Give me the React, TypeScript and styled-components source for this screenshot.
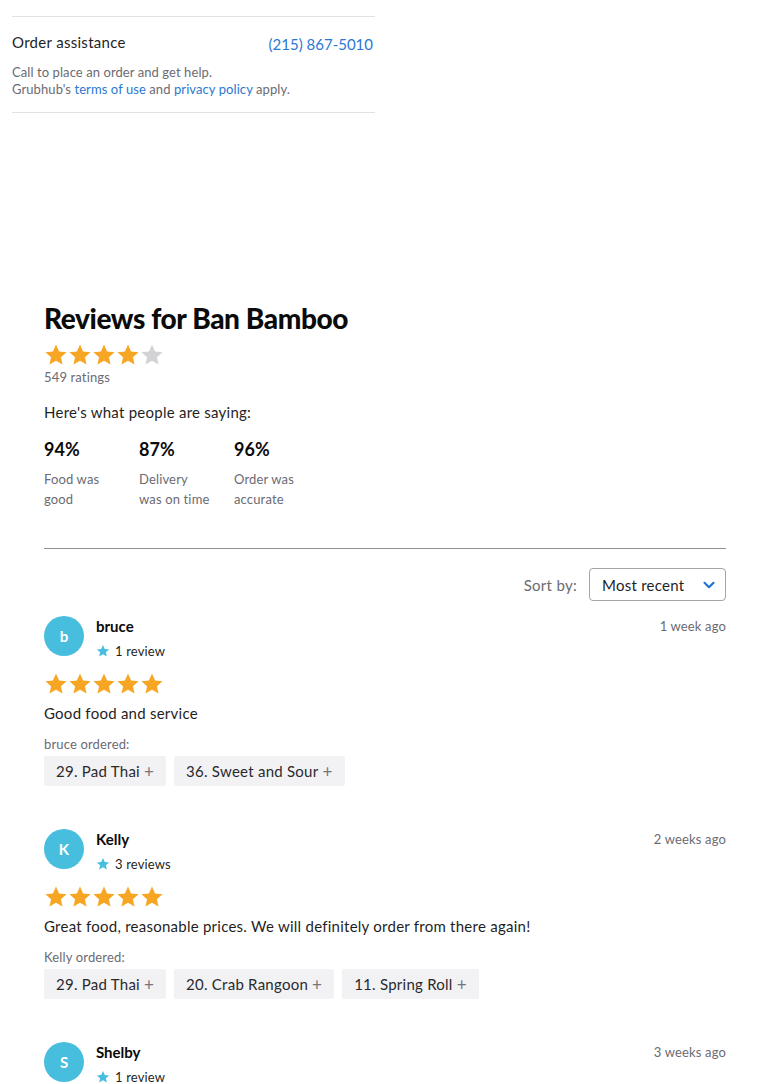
import React from "react";
import styled, { createGlobalStyle } from "styled-components";

const Global = createGlobalStyle`
  html, body { margin: 0; padding: 0; background: #fff; }
  body { font-family: Lato, "Liberation Sans", Arial, sans-serif; color: #1f1f1f; }
  * { box-sizing: border-box; }
`;

const Page = styled.div`
  width: 770px;
  min-height: 1084px;
  overflow: hidden;
`;

const AssistPanel = styled.section`
  width: 363px;
  margin-left: 12px;
  padding-top: 16px;
`;

const AssistInner = styled.div`
  border-top: 1px solid #e2e2e4;
  border-bottom: 1px solid #e2e2e4;
  padding: 15px 0 14px;
`;

const AssistRow = styled.div`
  display: flex;
  justify-content: space-between;
  align-items: flex-start;
`;

const AssistTitle = styled.span`
  font-size: 15px;
  line-height: 20px;
  letter-spacing: 0.3px;
  color: #1f1f1f;
`;

const Phone = styled.a`
  font-size: 15px;
  line-height: 20px;
  margin-top: 2px;
  margin-right: 2px;
  color: #2b78d3;
  text-decoration: none;
`;

const Fine = styled.p`
  margin: 10px 0 0;
  font-size: 13px;
  line-height: 17px;
  letter-spacing: 0.08px;
  color: #6b6b73;
`;

const Link = styled.a`
  color: #2b78d3;
  text-decoration: none;
`;

const Reviews = styled.section`
  width: 682px;
  margin: 188px 0 0 44px;
`;

const Heading = styled.h2`
  margin: 0;
  font-size: 28px;
  line-height: 34px;
  font-weight: 900;
  color: #0b0b0b;
  letter-spacing: -0.4px;
`;

const StarRow = styled.div<{ $mt: number }>`
  display: flex;
  margin-top: ${(p) => p.$mt}px;
  height: 24px;
`;

const Muted = styled.div<{ $mt: number }>`
  margin-top: ${(p) => p.$mt}px;
  font-size: 13px;
  line-height: 16px;
  letter-spacing: 0.15px;
  color: #6b6b73;
`;

const Body = styled.div<{ $mt: number }>`
  margin-top: ${(p) => p.$mt}px;
  font-size: 15px;
  line-height: 20px;
  letter-spacing: 0.25px;
  color: #1f1f1f;
`;

const Stats = styled.div`
  display: flex;
  margin-top: 15px;
`;

const Stat = styled.div`
  width: 95px;
`;

const StatValue = styled.div`
  font-size: 18px;
  line-height: 24px;
  font-weight: 700;
  color: #0b0b0b;
`;

const StatLabel = styled.div`
  margin-top: 8px;
  width: 72px;
  font-size: 13px;
  line-height: 20px;
  letter-spacing: 0.15px;
  color: #6b6b73;
`;

const Divider = styled.hr`
  margin: 39px 0 0;
  border: none;
  border-top: 1px solid #8f8f96;
  height: 0;
`;

const SortRow = styled.div`
  display: flex;
  justify-content: flex-end;
  align-items: center;
  gap: 12px;
  margin-top: 19px;
`;

const SortLabel = styled.span`
  font-size: 15px;
  letter-spacing: 0.3px;
  color: #6b6b73;
`;

const Select = styled.div`
  width: 137px;
  height: 33px;
  border: 1px solid #a4a4ab;
  border-radius: 4px;
  display: flex;
  align-items: center;
  justify-content: space-between;
  padding: 0 9px 0 12px;
  font-size: 15px;
  letter-spacing: 0.25px;
  color: #1f1f1f;
`;

const Review = styled.article`
  margin-top: 15px;
  padding-bottom: 28px;
`;

const ReviewHead = styled.div`
  display: flex;
  align-items: flex-start;
`;

const Avatar = styled.div`
  width: 40px;
  height: 40px;
  border-radius: 50%;
  background: #48bedf;
  color: #fff;
  font-weight: 700;
  font-size: 15px;
  display: flex;
  align-items: center;
  justify-content: center;
  flex-shrink: 0;
`;

const Who = styled.div`
  margin-left: 12px;
  flex: 1;
`;

const Name = styled.div`
  font-size: 15px;
  line-height: 20px;
  font-weight: 700;
  color: #0b0b0b;
`;

const Count = styled.div`
  margin-top: 7px;
  display: flex;
  align-items: center;
  gap: 5px;
  font-size: 13px;
  line-height: 16px;
  letter-spacing: 0.15px;
  color: #1f1f1f;
`;

const When = styled.div`
  font-size: 13px;
  line-height: 20px;
  letter-spacing: 0.15px;
  color: #6b6b73;
`;

const Chips = styled.div`
  display: flex;
  gap: 8px;
  margin-top: 4px;
`;

const Chip = styled.div`
  height: 30px;
  padding: 0 12px;
  display: flex;
  align-items: center;
  gap: 4px;
  background: #f2f2f4;
  border-radius: 2px;
  font-size: 15px;
  letter-spacing: 0.25px;
  color: #2a2a2e;
`;

const Plus = styled.span`
  color: #75757d;
  font-size: 17px;
`;

const STAR = "M12 1.6l3.05 6.9 7.5.72-5.66 5 1.66 7.36L12 17.75 5.45 21.58 7.1 14.22 1.45 9.22l7.5-.72z";

function Star({ color, size = 24 }: { color: string; size?: number }) {
  return (
    <svg width={size} height={size} viewBox="0 0 24 24" aria-hidden>
      <path d={STAR} fill={color} />
    </svg>
  );
}

function Stars({ n, mt }: { n: number; mt: number }) {
  return (
    <StarRow $mt={mt}>
      {[0, 1, 2, 3, 4].map((i) => (
        <Star key={i} color={i < n ? "#f6a623" : "#d3d3d6"} />
      ))}
    </StarRow>
  );
}

type R = { initial: string; name: string; count: string; when: string; text: string; items: string[] };

const data: R[] = [
  { initial: "b", name: "bruce", count: "1 review", when: "1 week ago", text: "Good food and service", items: ["29. Pad Thai", "36. Sweet and Sour"] },
  { initial: "K", name: "Kelly", count: "3 reviews", when: "2 weeks ago", text: "Great food, reasonable prices. We will definitely order from there again!", items: ["29. Pad Thai", "20. Crab Rangoon", "11. Spring Roll"] },
  { initial: "S", name: "Shelby", count: "1 review", when: "3 weeks ago", text: "", items: [] },
];

export default function App() {
  return (
    <Page>
      <Global />
      <AssistPanel>
        <AssistInner>
          <AssistRow>
            <AssistTitle>Order assistance</AssistTitle>
            <Phone>(215) 867-5010</Phone>
          </AssistRow>
          <Fine>
            Call to place an order and get help.
            <br />
            Grubhub's <Link>terms of use</Link> and <Link>privacy policy</Link> apply.
          </Fine>
        </AssistInner>
      </AssistPanel>

      <Reviews>
        <Heading>Reviews for Ban Bamboo</Heading>
        <Stars n={4} mt={8} />
        <Muted $mt={2}>549 ratings</Muted>
        <Body $mt={17}>Here's what people are saying:</Body>
        <Stats>
          <Stat>
            <StatValue>94%</StatValue>
            <StatLabel>Food was good</StatLabel>
          </Stat>
          <Stat>
            <StatValue>87%</StatValue>
            <StatLabel>Delivery was on time</StatLabel>
          </Stat>
          <Stat>
            <StatValue>96%</StatValue>
            <StatLabel>Order was accurate</StatLabel>
          </Stat>
        </Stats>
        <Divider />
        <SortRow>
          <SortLabel>Sort by:</SortLabel>
          <Select>
            <span>Most recent</span>
            <svg width="14" height="14" viewBox="0 0 14 14" aria-hidden>
              <path d="M2.5 4.8 7 9.2l4.5-4.4" fill="none" stroke="#1f72d6" strokeWidth="2.2" strokeLinecap="round" strokeLinejoin="round" />
            </svg>
          </Select>
        </SortRow>

        {data.map((r) => (
          <Review key={r.name}>
            <ReviewHead>
              <Avatar>{r.initial}</Avatar>
              <Who>
                <Name>{r.name}</Name>
                <Count>
                  <Star color="#48bedf" size={14} />
                  {r.count}
                </Count>
              </Who>
              <When>{r.when}</When>
            </ReviewHead>
            {r.text && (
              <>
                <Stars n={5} mt={13} />
                <Body $mt={7}>{r.text}</Body>
                <Muted $mt={13}>{r.name} ordered:</Muted>
                <Chips>
                  {r.items.map((it) => (
                    <Chip key={it}>
                      {it}
                      <Plus>+</Plus>
                    </Chip>
                  ))}
                </Chips>
              </>
            )}
          </Review>
        ))}
      </Reviews>
    </Page>
  );
}
